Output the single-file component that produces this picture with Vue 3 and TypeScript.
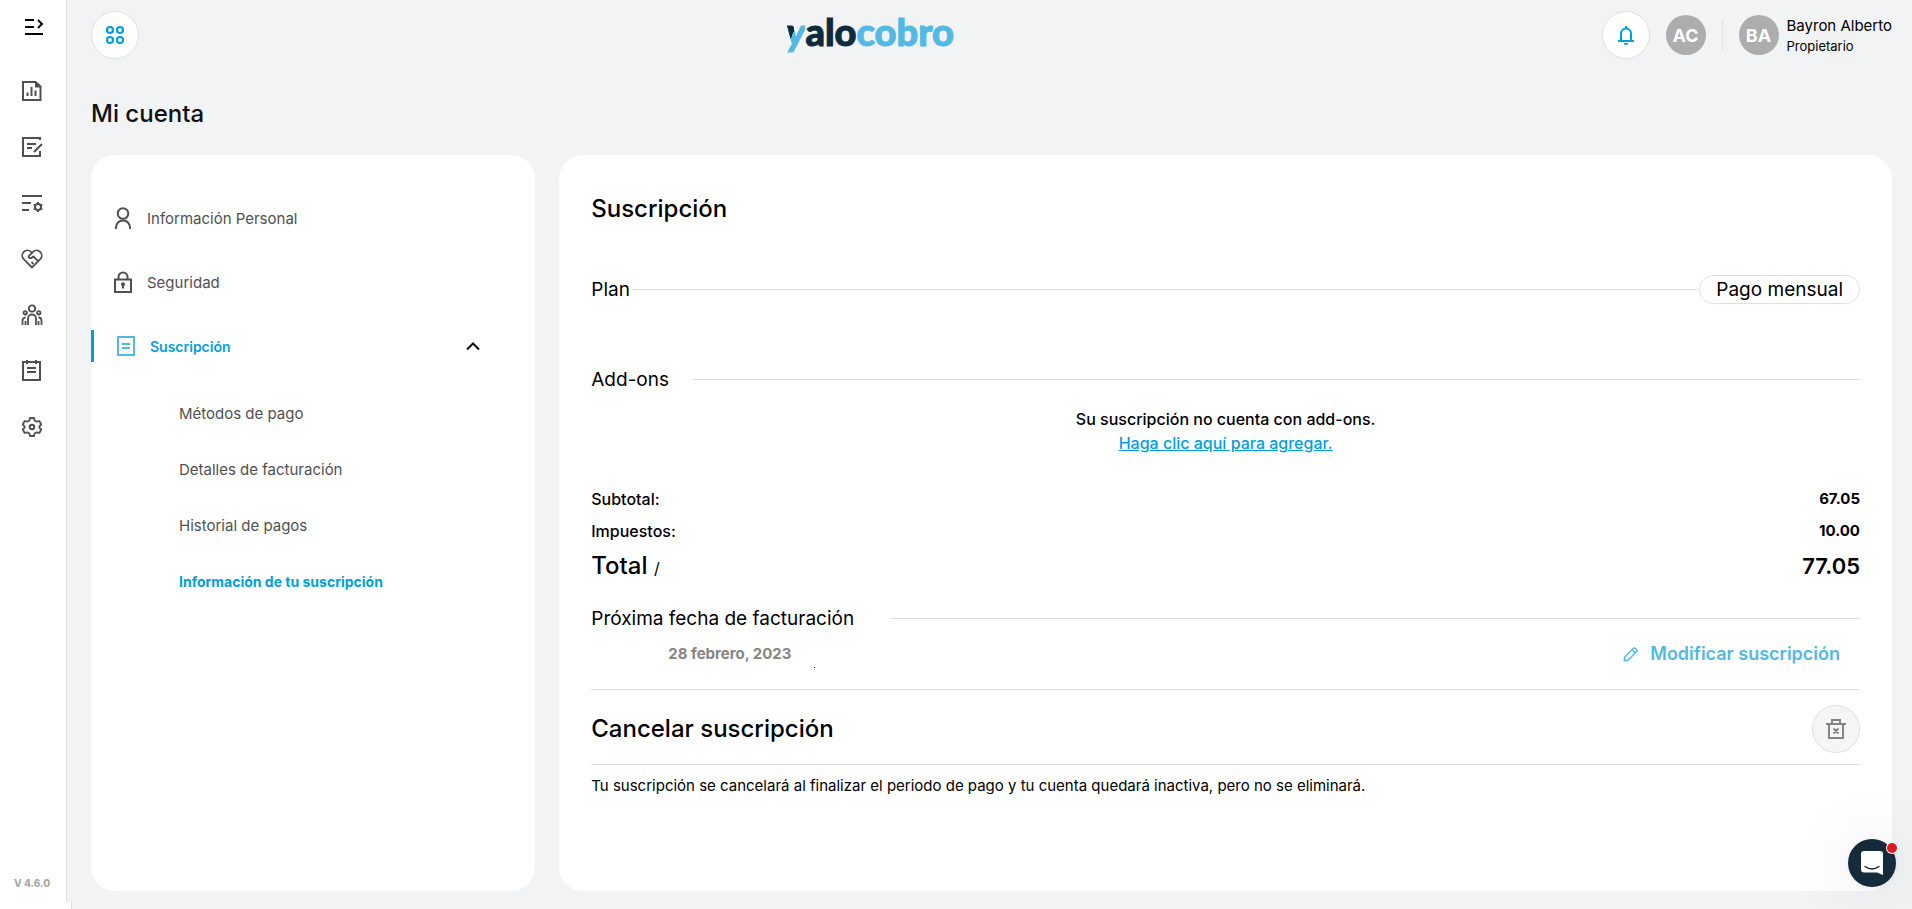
<script setup lang="ts">
import { ref } from 'vue'

interface NavItem { id: string; label: string }
interface SubItem { label: string; active?: boolean }

const navItems: NavItem[] = [
  { id: 'report', label: 'Reportes' },
  { id: 'edit', label: 'Solicitudes' },
  { id: 'config', label: 'Reglas' },
  { id: 'heart', label: 'Alianzas' },
  { id: 'people', label: 'Clientes' },
  { id: 'notes', label: 'Agenda' },
  { id: 'gear', label: 'Ajustes' },
]

const subItems: SubItem[] = [
  { label: 'Métodos de pago' },
  { label: 'Detalles de facturación' },
  { label: 'Historial de pagos' },
  { label: 'Información de tu suscripción', active: true },
]

const amounts = [
  { label: 'Subtotal:', value: '67.05' },
  { label: 'Impuestos:', value: '10.00' },
]

const open = ref(true)
</script>

<template>
  <div class="page">
    <aside class="rail">
      <button class="rail-btn toggle" type="button" aria-label="Expandir menú">
        <svg width="20" height="18" viewBox="0 0 20 18" fill="none" stroke="#000" stroke-width="2">
          <path d="M1 2h9M1 9h9M1 16h18" /><path d="M14 2l4 4-4 4" />
        </svg>
      </button>
      <nav class="rail-nav">
        <a v-for="item in navItems" :key="item.id" href="#" class="rail-btn" :aria-label="item.label">
          <svg width="22" height="22" viewBox="0 0 22 22" fill="none" stroke="#505052" stroke-width="2">
            <template v-if="item.id === 'report'">
              <path d="M2 2h12.5L19.500 6.500V20H2z" /><path d="M14 2l5.500 5.500H14z" fill="#505052" stroke="none" />
              <path d="M6.500 16v-3.500M10.500 16V7M14.500 16v-5.500" />
            </template>
            <template v-else-if="item.id === 'edit'">
              <path d="M19 4V2H2v18h17v-5" /><path d="M6 8h9M6 12h5M13 16l8-8" />
            </template>
            <template v-else-if="item.id === 'config'">
              <path d="M1 4h20M1 11h9M1 18h7" />
              <path d="M17 10v10M12.700 12.500l8.600 5M21.300 12.500l-8.600 5" />
              <circle cx="17" cy="15" r="3" fill="#fff" />
            </template>
            <template v-else-if="item.id === 'heart'">
              <path d="M11 19.500L2.700 11.200a5.200 5.200 0 0 1 7.300-7.400l1 1 1-1a5.200 5.200 0 0 1 7.300 7.400z" stroke-width="1.800" />
              <path d="M11 4.800L7.500 8.300c0 2 2 2.400 3.500 1.200l1.500-1 4.500 4.500M10.500 14l2 2" stroke-width="1.800" />
            </template>
            <template v-else-if="item.id === 'people'">
              <circle cx="11" cy="4.500" r="3.200" stroke-width="1.800" />
              <circle cx="4.200" cy="8.800" r="1.700" stroke-width="1.800" /><circle cx="17.800" cy="8.800" r="1.700" stroke-width="1.800" />
              <path d="M7 21v-6.500a4 4 0 0 1 8 0V21M1.500 21v-4.500a3 3 0 0 1 3-3M20.500 21v-4.500a3 3 0 0 0-3-3M4.500 21v-4M17.500 21v-4" stroke-width="1.800" />
            </template>
            <template v-else-if="item.id === 'notes'">
              <path d="M2 2h17v18H2zM6 0v4M15 0v4M6 8h9M6 12h9" />
            </template>
            <template v-else>
              <path d="M9 2h4l.6 2.500 2 1.200L18.300 5l2 3.500-1.900 1.900v1.300l1.900 1.800-2 3.500-2.700-.7-2 1.200L13 20H9l-.6-2.500-2-1.200-2.700.7-2-3.500 1.900-1.900v-1.300L1.700 8.500l2-3.500 2.700.7 2-1.200z" stroke-width="1.800" stroke-linejoin="round" />
              <circle cx="11" cy="11" r="2.200" />
            </template>
          </svg>
        </a>
      </nav>
      <span class="version">V 4.6.0</span>
    </aside>

    <main class="main">
      <header class="top">
        <button class="round" type="button" aria-label="Aplicaciones">
          <svg width="20" height="20" viewBox="0 0 20 20" fill="none" stroke="#009fdf" stroke-width="2.200">
            <circle cx="5" cy="5" r="3" /><circle cx="15" cy="5" r="3" /><circle cx="5" cy="15" r="3" /><circle cx="15" cy="15" r="3" />
          </svg>
        </button>
        <div class="logo"><span class="logo-y">y</span><span class="logo-dark">alo</span><span>cobro</span></div>
        <div class="account">
          <button class="round" type="button" aria-label="Notificaciones">
            <svg width="18" height="20" viewBox="0 0 18 20" fill="none" stroke="#009fdf" stroke-width="2">
              <path d="M1 16h16" /><path d="M4 16V8.500a5 5 0 0 1 10 0V16" />
              <path d="M9 1v2.500" /><path d="M7 18h4v.500a2 1.500 0 0 1-4 0z" fill="#009fdf" stroke="none" />
            </svg>
          </button>
          <span class="avatar">AC</span>
          <span class="divider"></span>
          <span class="avatar">BA</span>
          <div class="who"><span class="name">Bayron Alberto</span><span class="role">Propietario</span></div>
        </div>
      </header>

      <h1 class="title">Mi cuenta</h1>

      <div class="cards">
        <nav class="card menu">
          <a href="#" class="item">
            <svg width="18" height="22" viewBox="0 0 18 22" fill="none" stroke="#505052" stroke-width="2">
              <circle cx="9" cy="6.500" r="5.300" /><path d="M2 22v-1.500a7 7 0 0 1 14 0V22" />
            </svg>
            Información Personal
          </a>
          <a href="#" class="item">
            <svg width="18" height="22" viewBox="0 0 18 22" fill="none" stroke="#505052" stroke-width="2">
              <path d="M1 8.500h16V21H1zM4.500 8.500V6a4.500 4.500 0 0 1 9 0v2.500" />
              <circle cx="9" cy="13.300" r="2" fill="#505052" stroke="none" /><path d="M9 13v4.500" />
            </svg>
            Seguridad
          </a>
          <button class="item current" type="button" :aria-expanded="open" @click="open = !open">
            <svg width="18" height="20" viewBox="0 0 18 20" fill="none" stroke="#52b9e4" stroke-width="2">
              <path d="M1 1h16v18H1zM5 8h8M5 12h8" />
            </svg>
            <span>Suscripción</span>
            <svg class="chev" width="14" height="9" viewBox="0 0 14 9" fill="none" stroke="#111" stroke-width="2">
              <path d="M1 7.500l6-6 6 6" />
            </svg>
          </button>
          <ul v-if="open" class="sub">
            <li v-for="s in subItems" :key="s.label"><a href="#" :class="{ on: s.active }">{{ s.label }}</a></li>
          </ul>
        </nav>

        <section class="card detail">
          <h2 class="heading">Suscripción</h2>

          <div class="ruled plan"><h3>Plan</h3><span class="rule"></span><span class="pill">Pago mensual</span></div>

          <div class="ruled addons"><h3>Add-ons</h3><span class="rule"></span></div>
          <div class="empty">
            <p>Su suscripción no cuenta con add-ons.</p>
            <a href="#">Haga clic aquí para agregar.</a>
          </div>

          <dl class="amounts">
            <div v-for="a in amounts" :key="a.label"><dt>{{ a.label }}</dt><dd>{{ a.value }}</dd></div>
            <div class="total"><dt>Total <small>/</small></dt><dd>77.05</dd></div>
          </dl>

          <div class="ruled next"><h3>Próxima fecha de facturación</h3><span class="rule"></span></div>
          <div class="billing">
            <time datetime="2023-02-28">28 febrero, 2023</time>
            <span class="speck"></span>
            <button class="modify" type="button">
              <svg width="16" height="16" viewBox="0 0 16 16" fill="none" stroke="#52b9e4" stroke-width="1.500">
                <path d="M1.500 14.500v-3.200l9-9a1.200 1.200 0 0 1 1.700 0l1.500 1.500a1.200 1.200 0 0 1 0 1.700l-9 9zM9.500 4l2.600 2.600" />
              </svg>
              Modificar suscripción
            </button>
          </div>

          <div class="cancel">
            <h2>Cancelar suscripción</h2>
            <button class="round trash" type="button" aria-label="Cancelar suscripción">
              <svg width="20" height="20" viewBox="0 0 20 20" fill="none" stroke="#858386" stroke-width="2">
                <path d="M0 5h20M6 5V1h8v4M3 5v14h14V5M7.500 9.500l5 5M12.500 9.500l-5 5" />
              </svg>
            </button>
          </div>
          <p class="note">Tu suscripción se cancelará al finalizar el periodo de pago y tu cuenta quedará inactiva, pero no se eliminará.</p>
        </section>
      </div>
    </main>

    <button class="chat" type="button" aria-label="Abrir chat">
      <svg width="22" height="24" viewBox="0 0 22 24">
        <path d="M3 0h16a3 3 0 0 1 3 3v21l-6-2.500H3a3 3 0 0 1-3-3V3a3 3 0 0 1 3-3z" fill="#fff" />
        <path d="M4 15.500q7 5 14 0" fill="none" stroke="#152b3c" stroke-width="1.500" stroke-linecap="round" />
      </svg>
      <span class="badge"></span>
    </button>
  </div>
</template>

<style>
body { margin: 0; background: #f2f3f5; }
</style>

<style scoped>
* { box-sizing: border-box; }
h1, h2, h3, p, ul, dl, dd { margin: 0; padding: 0; }
button { font: inherit; border: 0; padding: 0; background: none; cursor: pointer; }
a { color: inherit; text-decoration: none; }
svg { display: block; flex: none; }
.page { display: flex; min-height: 100vh; background: #f2f3f5; color: #000; font-family: Inter, "Liberation Sans", sans-serif; font-size: 15px; padding-bottom: 7px; position: relative; }
.page::before { content: ""; position: absolute; left: 0; bottom: 0; width: 71px; height: 7px; background: #fff; border-right: 1px solid #e0e0e0; }
.rail { width: 67px; flex: none; background: #fff; border-right: 1px solid #e0e0e0; display: flex; flex-direction: column; }
.rail-btn { display: flex; align-items: center; justify-content: center; height: 56px; width: 63px; }
.toggle { width: 67px; height: 54px; }
.rail-nav { margin-top: 9px; }
.version { margin: auto 0 9px; padding-left: 14px; line-height: 20px; font-size: 10px; font-weight: 800; color: #a9a9ab; }
.main { flex: 1; min-width: 0; padding: 11px 20px 11px 24px; display: flex; flex-direction: column; }
.top { display: flex; align-items: center; justify-content: space-between; height: 48px; }
.round { width: 48px; height: 48px; border-radius: 50%; background: #fff; border: 1px solid #e0e0e0; display: flex; align-items: center; justify-content: center; }
.logo { font-family: Lato, sans-serif; font-weight: 900; font-size: 38px; line-height: 40px; padding-bottom: 8px; color: #52b9e4; -webkit-text-stroke: 1px currentColor; }
.logo-y { font-style: italic; background: linear-gradient(112deg, #0c2c3e 44%, #52b9e4 44%); -webkit-background-clip: text; background-clip: text; color: transparent; }
.logo-dark { color: #0c2c3e; }
.account { display: flex; align-items: center; }
.avatar { width: 40px; height: 40px; border-radius: 50%; background: #adadad; color: #fff; font-size: 18px; font-weight: 700; display: flex; align-items: center; justify-content: center; margin-left: 16px; }
.divider { width: 1px; height: 32px; background: #e0e0e0; margin-left: 16px; }
.who { margin-left: 8px; display: flex; flex-direction: column; line-height: 20px; padding-top: 2px; }
.name { font-size: 15px; }
.role { font-size: 13px; }
.title { font-size: 24px; line-height: 32px; font-weight: 500; color: #111; margin: 39px 0 25px; }
.cards { flex: 1; display: grid; grid-template-columns: minmax(0, 1fr) minmax(0, 3fr); gap: 24px; }
.card { background: #fff; border-radius: 24px; }
.menu { padding-top: 31px; color: #505052; }
.item { display: flex; align-items: center; gap: 15px; height: 64px; padding-left: 23px; }
.current { position: relative; width: 100%; padding: 0 55px 0 26px; color: #009fdf; font-size: 14px; font-weight: 600; }
.current::before { content: ""; position: absolute; left: 0; top: 16px; width: 3px; height: 32px; background: #009fdf; }
.chev { margin-left: auto; }
.sub { list-style: none; margin-top: 8px; padding-left: 88px; line-height: 56px; }
.sub .on { color: #009fdf; font-size: 14px; font-weight: 700; }
.detail { padding: 38px 32px 24px; }
.heading, .cancel h2 { font-size: 24px; line-height: 32px; font-weight: 500; }
.ruled { display: flex; align-items: center; height: 32px; }
.ruled h3, .pill { font-size: 19px; line-height: 27px; font-weight: 400; }
.rule { flex: 1; height: 1px; background: #e0e0e0; }
.plan { margin-top: 48px; }
.plan .rule { margin: 0 1px 0 2px; }
.pill { border: 1px solid #e0e0e0; border-radius: 15px; padding: 0 16px; }
.addons { margin-top: 58px; }
.addons .rule { margin-left: 24px; }
.empty { margin-top: 12px; text-align: center; font-size: 16px; line-height: 24px; font-weight: 500; }
.empty a { color: #009fdf; text-decoration: underline; }
.amounts { margin-top: 28px; font-size: 16px; line-height: 32px; font-weight: 500; }
.amounts div { display: flex; justify-content: space-between; }
.amounts dd { font-size: 15px; font-weight: 700; }
.amounts .total { font-size: 24px; line-height: 38px; font-weight: 500; }
.amounts .total dd { font-size: 22px; font-weight: 600; }
.total small { font-size: 16px; line-height: 16px; font-weight: 400; }
.next { margin-top: 17px; }
.next .rule { margin-left: 36px; }
.billing { display: flex; align-items: center; height: 56px; padding: 0 20px 16px 77px; border-bottom: 1px solid #e0e0e0; }
.billing time { font-size: 15px; font-weight: 700; color: #858585; }
.speck { width: 1px; height: 1px; background: #000; margin: 28px 0 0 23px; }
.modify { display: flex; align-items: center; gap: 11px; margin-left: auto; font-size: 18px; font-weight: 600; color: #52b9e4; }
.cancel { display: flex; align-items: center; justify-content: space-between; height: 75px; padding-top: 4px; border-bottom: 1px solid #e0e0e0; }
.trash { background: #f5f5f5; }
.note { margin-top: 9px; font-size: 15px; line-height: 24px; }
.chat { position: fixed; right: 16px; bottom: 22px; width: 48px; height: 48px; border-radius: 50%; background: #152b3c; display: flex; align-items: center; justify-content: center; box-shadow: 0 1px 6px rgba(0, 0, 0, .06), 0 2px 64px rgba(0, 0, 0, .12); }
.badge { position: absolute; right: -1px; top: 4px; width: 10px; height: 10px; border-radius: 50%; background: #e0191f; box-shadow: 0 0 0 1px #fff; }
</style>
